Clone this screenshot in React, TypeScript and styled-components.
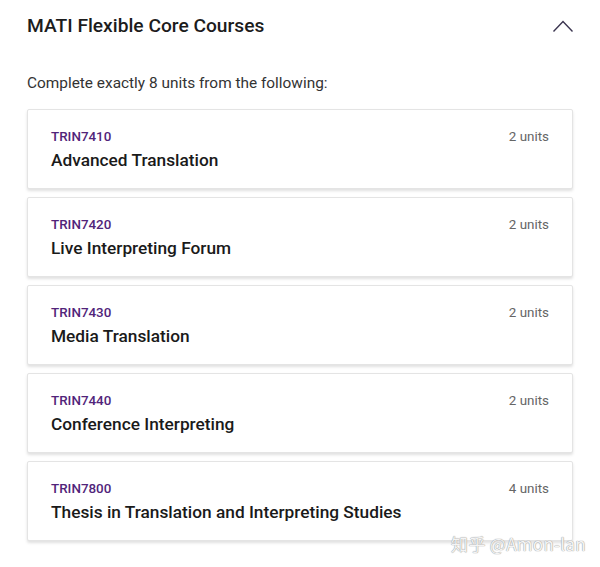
import React, { FC } from "react";
import styled, { createGlobalStyle } from "styled-components";

const GlobalStyle = createGlobalStyle`
  html, body {
    margin: 0;
    padding: 0;
    background: #ffffff;
  }
  body {
    font-family: Roboto, "Noto Sans", "Liberation Sans", sans-serif;
    color: #1a1a1a;
  }
`;

interface Course {
  code: string;
  title: string;
  units: number;
}

const courses: Course[] = [
  { code: "TRIN7410", title: "Advanced Translation", units: 2 },
  { code: "TRIN7420", title: "Live Interpreting Forum", units: 2 },
  { code: "TRIN7430", title: "Media Translation", units: 2 },
  { code: "TRIN7440", title: "Conference Interpreting", units: 2 },
  { code: "TRIN7800", title: "Thesis in Translation and Interpreting Studies", units: 4 },
];

const Page = styled.div`
  position: relative;
  width: 600px;
  height: 567px;
  box-sizing: border-box;
  padding: 14px 27px 0 27px;
  overflow: hidden;
`;

const Header = styled.div`
  display: flex;
  align-items: center;
  justify-content: space-between;
  height: 24px;
`;

const Heading = styled.h2`
  margin: 0;
  font-size: 19.2px;
  line-height: 24px;
  font-weight: 500;
  color: #1c1c1c;
`;

const Toggle = styled.button`
  display: flex;
  align-items: center;
  justify-content: center;
  width: 24px;
  height: 24px;
  margin-right: -2px;
  padding: 0;
  border: none;
  background: transparent;
  cursor: pointer;
`;

const Intro = styled.p`
  margin: 35px 0 0 0;
  font-size: 15.4px;
  line-height: 20px;
  color: #333333;
`;

const List = styled.div`
  display: flex;
  flex-direction: column;
  gap: 8px;
  margin-top: 16px;
`;

const Card = styled.div`
  display: flex;
  justify-content: space-between;
  align-items: flex-start;
  height: 80px;
  box-sizing: border-box;
  padding: 17px 23px;
  background: #ffffff;
  border: 1px solid #e4e4e4;
  border-radius: 2px;
  box-shadow: 0 2px 3px rgba(0, 0, 0, 0.12);
`;

const Info = styled.div`
  display: flex;
  flex-direction: column;
`;

const Code = styled.span`
  font-size: 13.4px;
  line-height: 19px;
  font-weight: 500;
  color: #51247a;
`;

const Title = styled.span`
  margin-top: 2px;
  font-size: 17.3px;
  line-height: 24px;
  font-weight: 500;
  color: #1a1a1a;
`;

const Units = styled.span`
  font-size: 13.4px;
  line-height: 19px;
  color: #666666;
`;

const Watermark = styled.div`
  position: absolute;
  right: 14px;
  bottom: 11px;
  font-family: "Noto Sans CJK SC", "Liberation Sans", sans-serif;
  font-size: 17px;
  color: #f4f4f4;
  text-shadow: 0 0 1px #9a9a9a, 0 0 1px #9a9a9a;
  letter-spacing: 0.3px;
`;

const Chevron: FC = () => (
  <svg width="22" height="14" viewBox="0 0 22 14" fill="none">
    <path d="M1.5 12.5 L11 2.5 L20.5 12.5" stroke="#3b3550" strokeWidth="1.4" />
  </svg>
);

const CourseCard: FC<{ course: Course }> = ({ course }) => (
  <Card>
    <Info>
      <Code>{course.code}</Code>
      <Title>{course.title}</Title>
    </Info>
    <Units>{course.units} units</Units>
  </Card>
);

const App: FC = () => (
  <>
    <GlobalStyle />
    <Page>
      <Header>
        <Heading>MATI Flexible Core Courses</Heading>
        <Toggle aria-label="Collapse">
          <Chevron />
        </Toggle>
      </Header>
      <Intro>Complete exactly 8 units from the following:</Intro>
      <List>
        {courses.map((c) => (
          <CourseCard key={c.code} course={c} />
        ))}
      </List>
      <Watermark>知乎 @Amon-lan</Watermark>
    </Page>
  </>
);

export default App;
